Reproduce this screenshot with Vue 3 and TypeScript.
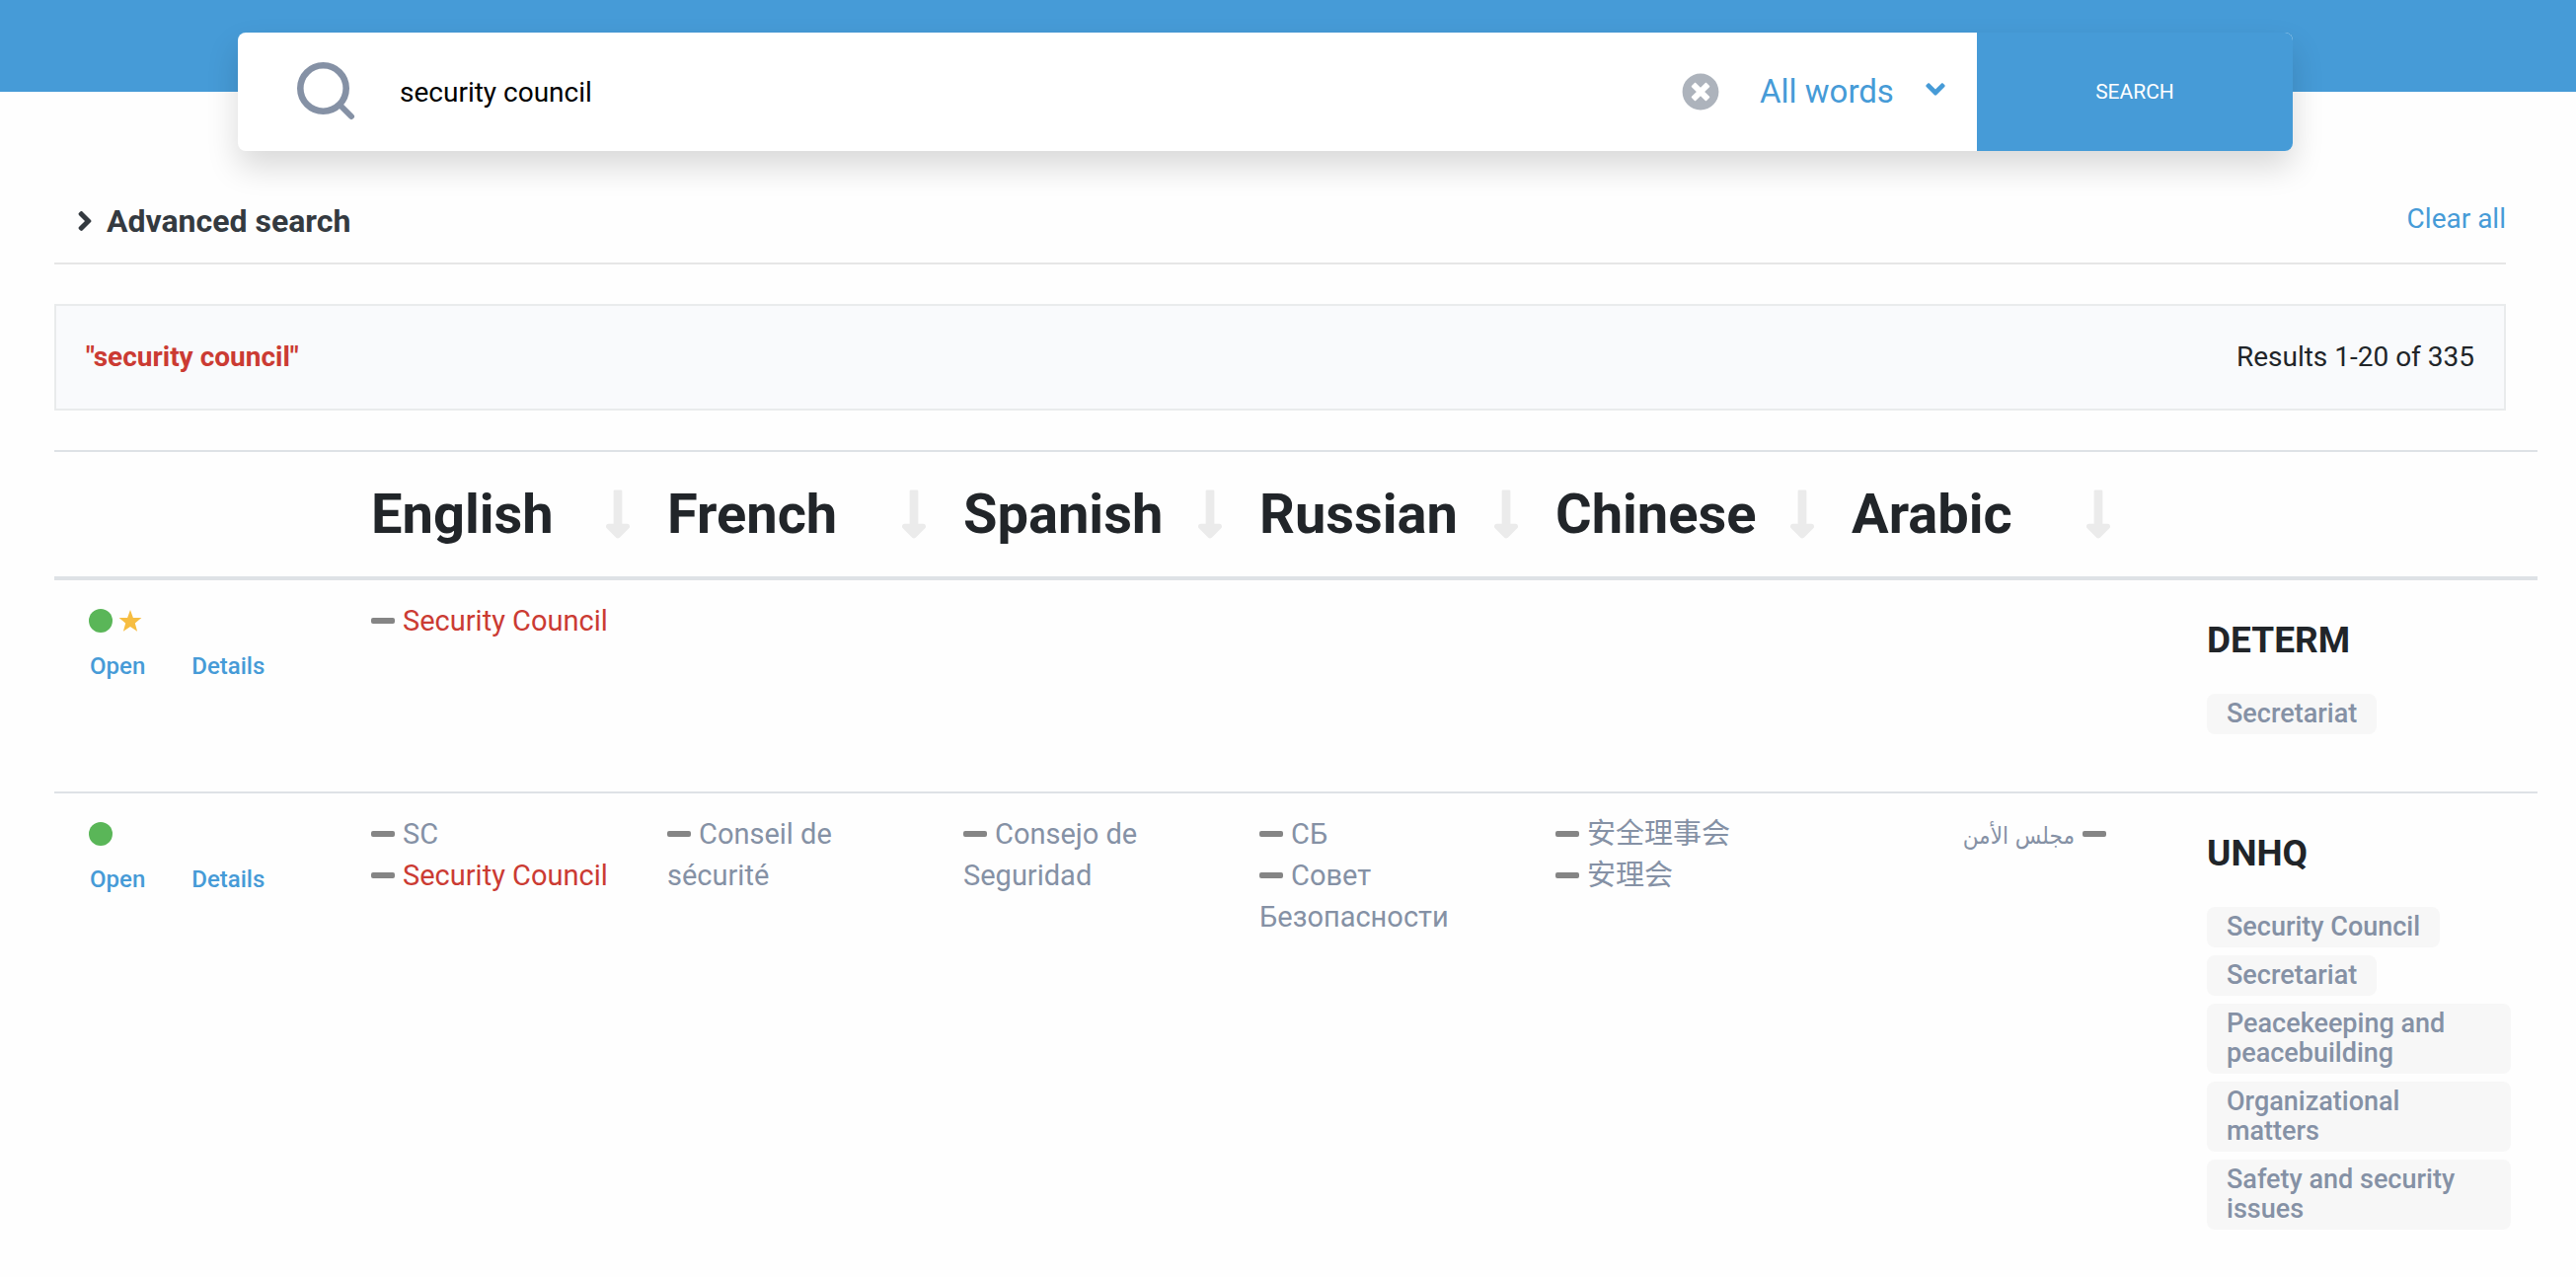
<script setup lang="ts">
import { ref } from 'vue'

interface Term {
  text: string
  match?: boolean
}

interface TermRecord {
  id: number
  starred: boolean
  terms: Record<string, Term[]>
  source: string
  subjects: string[]
}

const query = ref('security council')
const mode = ref('all')

const languages = [
  { code: 'en', label: 'English' },
  { code: 'fr', label: 'French' },
  { code: 'es', label: 'Spanish' },
  { code: 'ru', label: 'Russian' },
  { code: 'zh', label: 'Chinese' },
  { code: 'ar', label: 'Arabic' },
]

const records: TermRecord[] = [
  {
    id: 1,
    starred: true,
    terms: { en: [{ text: 'Security Council', match: true }] },
    source: 'DETERM',
    subjects: ['Secretariat'],
  },
  {
    id: 2,
    starred: false,
    terms: {
      en: [{ text: 'SC' }, { text: 'Security Council', match: true }],
      fr: [{ text: 'Conseil de sécurité' }],
      es: [{ text: 'Consejo de Seguridad' }],
      ru: [{ text: 'СБ' }, { text: 'Совет Безопасности' }],
      zh: [{ text: '安全理事会' }, { text: '安理会' }],
      ar: [{ text: 'مجلس الأمن' }],
    },
    source: 'UNHQ',
    subjects: [
      'Security Council',
      'Secretariat',
      'Peacekeeping and peacebuilding',
      'Organizational matters',
      'Safety and security issues',
    ],
  },
]
</script>

<template>
  <div class="page">
    <div class="banner"></div>

    <form class="search" role="search" @submit.prevent>
      <svg class="search-icon" viewBox="0 0 60 60" aria-hidden="true">
        <circle cx="27.500" cy="26.500" r="23.200" fill="none" stroke="currentColor" stroke-width="6.600" />
        <path d="M44 43L56 55" fill="none" stroke="currentColor" stroke-width="6" stroke-linecap="round" />
      </svg>
      <input v-model="query" class="query" type="text" aria-label="Search terms" />
      <button class="reset" type="button" aria-label="Clear search text" @click="query = ''">
        <svg viewBox="0 0 512 512" aria-hidden="true">
          <path fill="currentColor" d="M256 8C119 8 8 119 8 256s111 248 248 248 248-111 248-248S393 8 256 8zm121.600 313.100c4.700 4.700 4.700 12.300 0 17L338 377.600c-4.700 4.700-12.300 4.700-17 0L256 312l-65.100 65.600c-4.700 4.700-12.300 4.700-17 0L134.400 338c-4.700-4.700-4.700-12.300 0-17l65.600-65-65.600-65.100c-4.700-4.700-4.700-12.300 0-17l39.600-39.600c4.700-4.700 12.300-4.700 17 0l65 65.700 65.100-65.600c4.700-4.700 12.300-4.700 17 0l39.600 39.600c4.700 4.700 4.700 12.300 0 17L312 256l65.600 65.100z" />
        </svg>
      </button>
      <div class="mode">
        <select v-model="mode" aria-label="Match mode">
          <option value="all">All words</option>
          <option value="any">Any word</option>
          <option value="exact">Exact</option>
        </select>
        <svg viewBox="0 0 320 512" aria-hidden="true">
          <path fill="currentColor" d="M143 352.300L7 216.300c-9.400-9.400-9.400-24.600 0-33.900l22.600-22.600c9.400-9.400 24.600-9.400 33.900 0l96.400 96.400 96.400-96.400c9.400-9.400 24.600-9.400 33.900 0l22.600 22.600c9.400 9.400 9.400 24.600 0 33.900l-136 136c-9.200 9.400-24.400 9.400-33.800 0z" />
        </svg>
      </div>
      <button class="submit" type="submit">SEARCH</button>
    </form>

    <main class="content">
      <div class="toolbar">
        <button class="advanced" type="button" aria-expanded="false">
          <svg viewBox="0 0 256 512" aria-hidden="true">
            <path fill="currentColor" d="M224.300 273l-136 136c-9.400 9.400-24.600 9.400-33.900 0l-22.600-22.600c-9.400-9.400-9.400-24.600 0-33.900l96.400-96.400-96.400-96.400c-9.400-9.400-9.400-24.600 0-33.900L54.300 103c9.400-9.400 24.600-9.400 33.900 0l136 136c9.500 9.400 9.500 24.600.1 34z" />
          </svg>
          Advanced search
        </button>
        <a class="clear-all" href="#">Clear all</a>
      </div>

      <div class="summary">
        <strong>"security council"</strong>
        <span>Results 1-20 of 335</span>
      </div>

      <table class="results">
        <colgroup>
          <col class="col-actions" />
          <col v-for="lang in languages" :key="lang.code" />
          <col class="col-meta" />
        </colgroup>
        <thead>
          <tr>
            <th></th>
            <th v-for="lang in languages" :key="lang.code" scope="col">
              <div class="heading">
                {{ lang.label }}
                <button class="sort" type="button" :aria-label="`Sort by ${lang.label}`">
                  <svg viewBox="0 0 256 512" aria-hidden="true">
                    <path fill="currentColor" d="M168 345.941V44c0-6.627-5.373-12-12-12h-56c-6.627 0-12 5.373-12 12v301.941H41.941c-21.382 0-32.090 25.851-16.971 40.971l86.059 86.059c9.373 9.373 24.569 9.373 33.941 0l86.059-86.059c15.119-15.119 4.411-40.971-16.971-40.971H168z" />
                  </svg>
                </button>
              </div>
            </th>
            <th></th>
          </tr>
        </thead>
        <tbody>
          <tr v-for="record in records" :key="record.id">
            <td class="actions">
              <div class="marks">
                <span class="dot"></span>
                <svg v-if="record.starred" class="star" viewBox="0 0 24 24" aria-hidden="true">
                  <path fill="currentColor" d="M12 1l2.900 8h8.500l-6.600 5.500 2.300 8.200L12 18l-7.100 4.700 2.300-8.200L.6 9h8.500z" />
                </svg>
              </div>
              <div class="links">
                <a href="#">Open</a>
                <a href="#">Details</a>
              </div>
            </td>
            <td
              v-for="lang in languages"
              :key="lang.code"
              class="terms"
              :lang="lang.code"
              :dir="lang.code === 'ar' ? 'rtl' : 'ltr'"
            >
              <div v-for="term in record.terms[lang.code]" :key="term.text">
                <span class="dash"></span><span class="term" :class="{ match: term.match }">{{ term.text }}</span>
              </div>
            </td>
            <td class="meta">
              <h5>{{ record.source }}</h5>
              <ul>
                <li v-for="subject in record.subjects" :key="subject">{{ subject }}</li>
              </ul>
            </td>
          </tr>
        </tbody>
      </table>
    </main>
  </div>
</template>

<style>
body {
  margin: 0;
  background: #fefefe;
}
</style>

<style scoped>
.page {
  color: #212529;
  font-family: Roboto, "Noto Sans CJK SC", "DejaVu Sans", sans-serif;
  font-size: 28px;
  line-height: 42px;
}

button,
input,
select {
  margin: 0;
  padding: 0;
  border: 0;
  background: none;
  color: inherit;
  font: inherit;
}

a {
  color: #469bd7;
  text-decoration: none;
}

svg {
  display: block;
}

.banner {
  height: 93px;
  background: #469bd7;
}

.search {
  position: relative;
  display: flex;
  align-items: center;
  height: 120px;
  margin: -60px 287px 0 241px;
  padding-left: 59px;
  box-sizing: border-box;
  border-radius: 8px;
  background: #fff;
  box-shadow: 0 16px 32px rgba(0, 0, 0, 0.15);
}

.search-icon {
  width: 60px;
  height: 60px;
  margin-right: 45px;
  color: #8591a5;
}

.query {
  flex: 1;
  min-width: 0;
  padding-top: 2px;
  color: #000;
  outline: none;
}

.reset {
  margin-right: 41px;
  color: #adb3bc;
}

.reset svg {
  width: 38px;
  height: 38px;
}

.mode {
  position: relative;
  margin-right: 32px;
  color: #469bd7;
  font-size: 33px;
}

.mode select {
  width: 188px;
  appearance: none;
}

.mode svg {
  position: absolute;
  top: 3px;
  right: 0;
  width: 20px;
  height: 31px;
  pointer-events: none;
}

.submit {
  align-self: stretch;
  width: 320px;
  border-radius: 0 8px 8px 0;
  background: #469bd7;
  color: #fff;
  font-size: 21px;
}

.content {
  padding: 51px 39px 0 55px;
}

.toolbar {
  display: flex;
  justify-content: space-between;
  align-items: flex-start;
  margin-right: 32px;
  padding-bottom: 22px;
  border-bottom: 2px solid #e6e6e6;
}

.advanced {
  display: flex;
  align-items: center;
  gap: 14px;
  padding-left: 23px;
  color: #343a40;
  font-size: 32px;
  font-weight: 700;
  line-height: 40px;
}

.advanced svg {
  width: 16px;
  height: 32px;
}

.clear-all {
  line-height: 36px;
}

.summary {
  display: flex;
  justify-content: space-between;
  margin: 40px 32px 40px 0;
  padding: 31px 30px;
  border: 2px solid #e9ebec;
  background: #f9fafc;
}

.summary strong {
  font-weight: 700;
}

.summary strong,
.match {
  color: #cb3b33;
}

.results {
  width: 100%;
  table-layout: fixed;
  border-collapse: separate;
  border-spacing: 0;
}

.col-actions {
  width: 297px;
}

.col-meta {
  width: 419px;
}

th {
  padding: 29px 12px 29px 24px;
  border-top: 2px solid #dee2e6;
  border-bottom: 4px solid #dee2e6;
  font-size: 56px;
  font-weight: 700;
  line-height: 68px;
}

.heading {
  display: flex;
  justify-content: space-between;
  align-items: center;
}

.sort {
  color: #ebebeb;
}

.sort svg {
  width: 28px;
  height: 56px;
}

td {
  padding: 0;
  vertical-align: top;
  border-bottom: 2px solid #dee2e6;
}

.actions {
  padding: 29px 0 0 35px;
}

.marks {
  display: flex;
  gap: 6px;
  height: 24px;
}

.dot {
  width: 24px;
  height: 24px;
  border-radius: 50%;
  background: #5ab658;
}

.star {
  width: 24px;
  height: 24px;
  color: #f6bd41;
}

.links {
  display: flex;
  gap: 47px;
  margin-top: 16px;
  padding-left: 1px;
  font-size: 24px;
  font-weight: 500;
  line-height: 36px;
}

.terms {
  padding: 20px 18px 20px 24px;
  color: #8591a5;
  font-size: 29px;
}

.terms:lang(ar) .term {
  font-family: "DejaVu Sans Condensed", "DejaVu Sans", sans-serif;
  font-size: 24px;
  line-height: 30px;
}

.dash {
  display: inline-block;
  width: 24px;
  height: 6px;
  margin-inline-end: 8px;
  border-radius: 2px;
  background: #858585;
  vertical-align: 7px;
}

.meta {
  padding: 39px 27px 58px 84px;
}

h5 {
  margin: 0 0 32px;
  font-size: 37px;
  font-weight: 700;
  line-height: 44px;
}

ul {
  display: flex;
  flex-direction: column;
  align-items: flex-start;
  gap: 8px;
  margin: 0;
  padding: 0;
  list-style: none;
}

li {
  padding: 5px 20px 6px;
  border-radius: 8px;
  background: #f7f7f7;
  color: #8591a5;
  font-size: 27px;
  font-weight: 500;
  line-height: 30px;
}
</style>
